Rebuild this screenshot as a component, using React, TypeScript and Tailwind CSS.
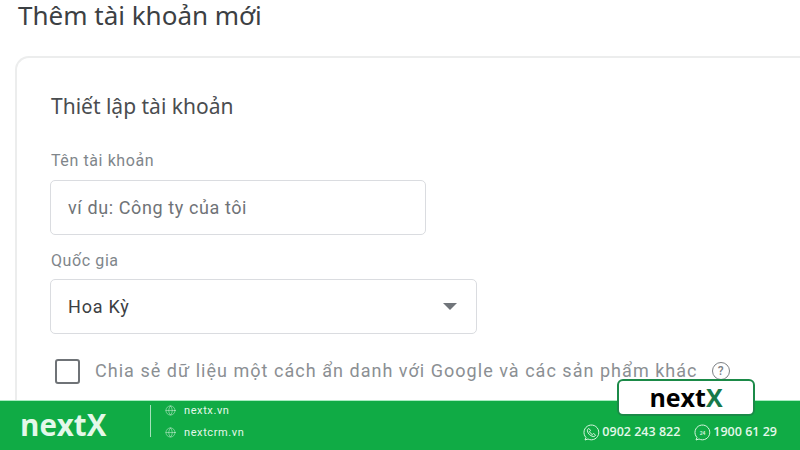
import { Globe } from "lucide-react";

function PhoneRing({ label }: { label?: string }) {
  return (
    <svg width="17" height="17" viewBox="0 0 17 17" fill="none" stroke="#d8f5e0" strokeWidth="1">
      <path d="M3 13.5A7.4 7.4 0 1 1 5 15l-3 1z" />
      {label ? (
        <text x="8.5" y="10.5" fontSize="5" fill="#d8f5e0" stroke="none" textAnchor="middle" fontFamily="Roboto, sans-serif">
          {label}
        </text>
      ) : (
        <path d="M6 4.5l1.5 2-1 1.2c.6 1.3 1.5 2.2 2.8 2.8l1.2-1 2 1.5c-.4 1.3-1.3 1.8-2.5 1.500-3-.8-5-2.800-5.600-5.600C4.200 5.700 4.800 4.800 6 4.500z" />
      )}
    </svg>
  );
}

function NextX({ xColor }: { xColor: string }) {
  return (
    <span className="font-['Open_Sans',sans-serif] font-bold">
      next<span className={xColor}>X</span>
    </span>
  );
}

export default function App() {
  return (
    <div className="relative flex h-[450px] w-[800px] flex-col overflow-hidden bg-white font-['Roboto',sans-serif]">
      <div className="flex h-[400px] flex-col overflow-hidden pl-[15px]">
        <h1 className="ml-[3px] h-[56px] font-['Noto_Sans',sans-serif] text-[26px] leading-[31px] text-[#3c4043]">
          Thêm tài khoản mới
        </h1>
        <div className="-mr-[20px] flex-1 rounded-tl-[14px] border-t-2 border-l-2 border-[#eceded] pl-[33px]">
          <h2 className="mt-[34px] ml-[1px] font-['Noto_Sans',sans-serif] text-[21px] leading-[28px] text-[#4a4d50]">
            Thiết lập tài khoản
          </h2>
          <label className="mt-[31px] ml-[1px] block text-[16px] leading-[20px] tracking-[0.6px] text-[#80868b]">
            Tên tài khoản
          </label>
          <div className="mt-[9px] flex h-[55px] w-[376px] items-center rounded-[5px] border border-[#dadce0] pl-[17px] text-[18px] tracking-[0.6px] text-[#6f7377]">
            ví dụ: Công ty của tôi
          </div>
          <label className="mt-[16px] ml-[1px] block text-[16px] leading-[20px] tracking-[0.6px] text-[#80868b]">
            Quốc gia
          </label>
          <div className="mt-[8px] flex h-[55px] w-[427px] items-center justify-between rounded-[5px] border border-[#dadce0] pr-[19px] pl-[17px] text-[18px] tracking-[0.8px] text-[#3c4043]">
            Hoa Kỳ
            <span className="h-0 w-0 border-x-[7px] border-t-[7px] border-x-transparent border-t-[#70757a]" />
          </div>
          <div className="mt-[23px] flex items-center">
            <span className="ml-[5px] h-[25px] w-[25px] rounded-[3px] border-2 border-[#6f7377]" />
            <span className="ml-[15px] text-[18px] leading-[28px] tracking-[1.03px] whitespace-nowrap text-[#8b8f93]">
              Chia sẻ dữ liệu một cách ẩn danh với Google và các sản phẩm khác
            </span>
            <span className="ml-[14px] flex h-[18px] w-[18px] items-center justify-center rounded-full border-[1.5px] border-[#7d8185] text-[12px] leading-none font-medium text-[#7d8185]">
              ?
            </span>
          </div>
        </div>
      </div>

      <footer className="flex h-[50px] items-center border-t border-[#a8ecc0] bg-[#10ab45] text-[#e4f8ea]">
        <div className="ml-[20px] w-[130px] text-[29.500px] leading-none">
          <NextX xColor="text-[#e4f8ea]" />
        </div>
        <div className="mb-[9px] h-[32px] w-px bg-[#a5e2ba]" />
        <div className="mb-[9px] ml-[14px] flex flex-col gap-[7px] text-[11px] leading-[15px] tracking-[0.6px]">
          <div className="flex items-center gap-[8px]">
            <Globe size={11} strokeWidth={1} />
            nextx.vn
          </div>
          <div className="flex items-center gap-[8px]">
            <Globe size={11} strokeWidth={1} />
            nextcrm.vn
          </div>
        </div>
        <div className="mr-[23px] ml-auto flex items-center pt-[13px] font-['Open_Sans',sans-serif] text-[12.500px] font-semibold">
          <PhoneRing />
          <span className="ml-[2px]">0902 243 822</span>
          <span className="ml-[14px]">
            <PhoneRing label="24" />
          </span>
          <span className="ml-[2px]">1900 61 29</span>
        </div>
      </footer>

      <div className="absolute top-[379px] left-[617px] flex h-[37px] w-[138px] items-center justify-center rounded-[6px] border-2 border-[#1b8a48] bg-white text-[25px] leading-none text-black">
        <NextX xColor="text-[#17794a]" />
      </div>
    </div>
  );
}
